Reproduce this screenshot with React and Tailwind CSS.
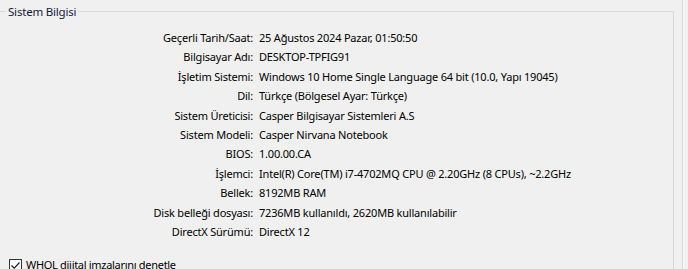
import React from "react";

const rows = [
  ["Geçerli Tarih/Saat:", "25 Ağustos 2024 Pazar, 01:50:50"],
  ["Bilgisayar Adı:", "DESKTOP-TPFIG91"],
  ["İşletim Sistemi:", "Windows 10 Home Single Language 64 bit (10.0, Yapı 19045)"],
  ["Dil:", "Türkçe (Bölgesel Ayar: Türkçe)"],
  ["Sistem Üreticisi:", "Casper Bilgisayar Sistemleri A.S"],
  ["Sistem Modeli:", "Casper Nirvana Notebook"],
  ["BIOS:", "1.00.00.CA"],
  ["İşlemci:", "Intel(R) Core(TM) i7-4702MQ CPU @ 2.20GHz (8 CPUs), ~2.2GHz"],
  ["Bellek:", "8192MB RAM"],
  ["Disk belleği dosyası:", "7236MB kullanıldı, 2620MB kullanılabilir"],
  ["DirectX Sürümü:", "DirectX 12"],
];

const App = () => {
  return (
    <div
      className="w-[688px] h-[269px] overflow-hidden bg-[#f0f0f0] text-black flex"
      style={{ fontFamily: '"Noto Sans", "Open Sans", sans-serif' }}
    >
      {/* Sistem Bilgisi group */}
      <fieldset className="ml-[-4px] mt-[3px] w-[678px] h-[300px] border border-[#d9d9d9] shrink-0">
        <legend className="ml-[9px] px-[2px] text-[11.5px] leading-[17px] tracking-[-0.2px] text-[#14183a]">
          Sistem Bilgisi
        </legend>

        <div className="grid grid-cols-[256px_1fr] gap-x-[6px] mt-[8px] text-[11px] tracking-[-0.2px]">
          {rows.map(([label, value]) => (
            <React.Fragment key={label}>
              <div className="text-right leading-[19.4px] whitespace-nowrap">{label}</div>
              <div className="leading-[19.4px] whitespace-nowrap">{value}</div>
            </React.Fragment>
          ))}
        </div>

        <label className="flex items-center gap-[4px] ml-[12px] mt-[16px] text-[11px] leading-[16px] tracking-[-0.3px]">
          <span className="w-[13px] h-[13px] border border-[#333] bg-white flex items-center justify-center shrink-0">
            <svg width="11" height="11" viewBox="0 0 11 11">
              <path d="M1.5 5.5 L4.2 8.2 L9.5 2.5" stroke="#222" strokeWidth="1.2" fill="none" />
            </svg>
          </span>
          WHQL dijital imzalarını denetle
        </label>
      </fieldset>

      {/* window edge */}
      <div className="ml-[8px] w-[3px] h-full border-l border-[#d9d9d9] bg-[#f5f5f5]" />
    </div>
  );
};

export default App;
